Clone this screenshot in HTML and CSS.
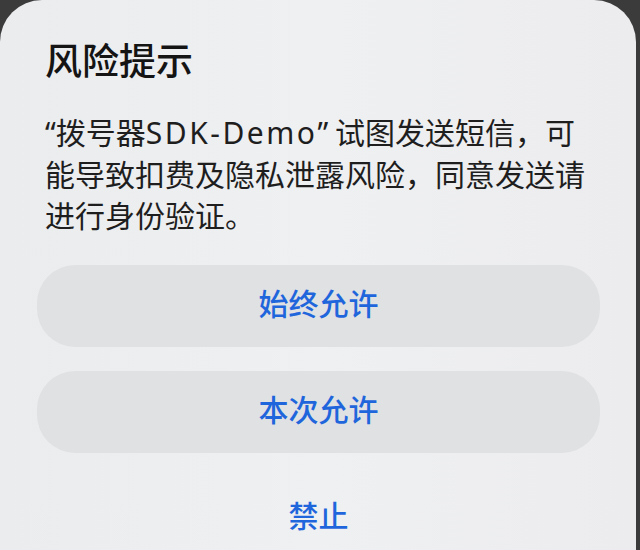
FILE: index.html
```html
<!DOCTYPE html>
<html lang="zh-CN">
<head>
<meta charset="utf-8">
<title>风险提示</title>
<link rel="stylesheet" href="styles.css">
</head>
<body>
<div class="dialog">
  <h1 class="title">风险提示</h1>
  <p class="message"><span class="q">“</span>拨号器<span class="latin">SDK-Demo</span><span class="q">”</span> 试图发送短信，可能导致扣费及隐私泄露风险，同意发送请进行身份验证。</p>
  <div class="actions">
    <button class="btn btn-filled">始终允许</button>
    <button class="btn btn-filled">本次允许</button>
    <button class="btn btn-plain">禁止</button>
  </div>
</div>
</body>
</html>
```

FILE: styles.css
```css
html, body {
  margin: 0;
  padding: 0;
  height: 100%;
  overflow: hidden;
}
body {
  background: #3b3b3c;
  font-family: "Noto Sans CJK SC", "Noto Sans", sans-serif;
}
.dialog {
  margin-right: 4px;
  min-height: 600px;
  background: linear-gradient(90deg, #ebecee 0%, #eff0f2 50%, #ececee 100%);
  border-radius: 42px 42px 0 0;
  padding: 37px 36px 0 37px;
  box-sizing: border-box;
}
.title {
  margin: 0 0 0 8px;
  font-size: 37px;
  line-height: 44px;
  font-weight: 500;
  color: #141414;
}
.message {
  margin: 30px 0 30px 8px;
  font-size: 30px;
  line-height: 41px;
  color: #1e1e1e;
  font-weight: 400;
}
.q {
  font-family: "Noto Sans", "Liberation Sans", sans-serif;
}
.latin {
  font-family: "Noto Sans", "Liberation Sans", sans-serif;
  letter-spacing: 2.5px;
}
.actions {
  display: flex;
  flex-direction: column;
  gap: 24px;
}
.btn {
  height: 82px;
  border: 0;
  border-radius: 38px;
  font-family: inherit;
  font-size: 30px;
  font-weight: 500;
  color: #1f66dc;
  padding: 0 0 8px 0;
}
.btn-filled {
  background: #e0e1e3;
}
.btn-plain {
  background: transparent;
}
```
